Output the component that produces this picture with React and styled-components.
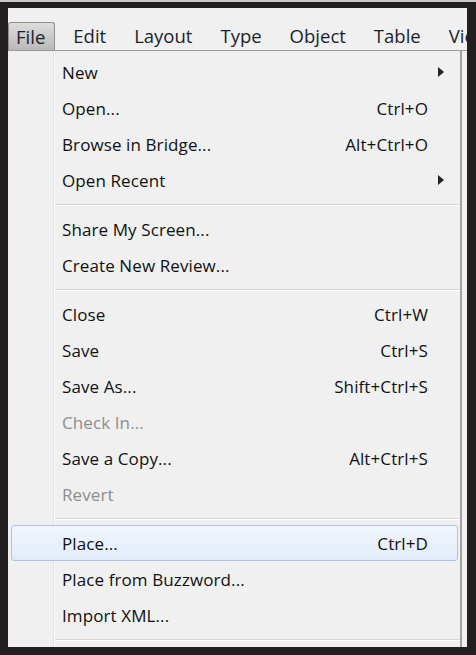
import React from "react";
import styled, {createGlobalStyle} from "styled-components";

const GlobalStyle = createGlobalStyle`
  body {
    margin: 0;
    background: #231f20;
  }
`;

const Frame = styled.div`
  width: 476px;
  height: 655px;
  box-sizing: border-box;
  background: #231f20;
  border-top: 2px solid #c9c9c9;
  padding: 6px 9px 8px 8px;
`;

const Window = styled.div`
  height: 100%;
  background: #f0f0f0;
  display: flex;
  flex-direction: column;
  overflow: hidden;
  font-family: "Open Sans", "Noto Sans", sans-serif;
  color: #111;
`;

const MenuBar = styled.div`
  height: 42px;
  flex: none;
  display: flex;
  align-items: flex-end;
  white-space: nowrap;
  border-bottom: 1px solid #9a9a9a;
  margin-right: -40px;
`;

const MenuTitle = styled.div`
  height: 28px;
  box-sizing: border-box;
  padding: 0 28px 0 0;
  font-size: 18.5px;
  line-height: 28px;
  color: #1b1f2b;
  ${p => p.$active && `
    background: linear-gradient(#dcdcdc, #b9b9b9);
    border: 1px solid #8e8e8e;
    border-bottom: none;
    border-radius: 3px 3px 0 0;
    padding: 0 9px 0 7px;
    margin-right: 18px;
    line-height: 27px;
  `}
`;

const Dropdown = styled.div`
  flex: 1;
  display: flex;
  width: 454px;
  box-sizing: border-box;
  border-right: 2px solid #a2a2a2;
  padding: 3px 0 0 0;
  position: relative;
`;

const Gutter = styled.div`
  position: absolute;
  left: 45px;
  top: 0;
  bottom: 0;
  width: 1px;
  background: #e2e2e2;
  border-right: 1px solid #fafafa;
`;

const List = styled.div`
  flex: 1;
  display: flex;
  flex-direction: column;
  position: relative;
`;

const Item = styled.div`
  height: 36px;
  box-sizing: border-box;
  display: flex;
  align-items: center;
  padding: 0 29px 0 50px;
  margin: 0 2px 0 3px;
  font-size: 17px;
  letter-spacing: 0.1px;
  color: ${p => (p.$disabled ? "#8d8d8d" : "#111")};
  border: 1px solid transparent;
  border-radius: 3px;
  ${p => p.$hover && `
    border-color: #a9c6e6;
    background: linear-gradient(#f1f6fd, #e2ecf9);
  `}
`;

const Label = styled.span`
  flex: 1;
`;

const Shortcut = styled.span`
  color: #111;
`;

const Arrow = styled.span`
  width: 0;
  height: 0;
  border-top: 5px solid transparent;
  border-bottom: 5px solid transparent;
  border-left: 6px solid #222;
  margin-right: -16px;
`;

const Separator = styled.div`
  height: 13px;
  display: flex;
  align-items: center;
  margin-left: 47px;
  &::after {
    content: "";
    flex: 1;
    height: 1px;
    background: #d7d7d7;
    border-bottom: 1px solid #fff;
  }
`;

const menus = ["File", "Edit", "Layout", "Type", "Object", "Table", "View"];

const groups = [
  [
    {label: "New", sub: true},
    {label: "Open...", key: "Ctrl+O"},
    {label: "Browse in Bridge...", key: "Alt+Ctrl+O"},
    {label: "Open Recent", sub: true},
  ],
  [
    {label: "Share My Screen..."},
    {label: "Create New Review..."},
  ],
  [
    {label: "Close", key: "Ctrl+W"},
    {label: "Save", key: "Ctrl+S"},
    {label: "Save As...", key: "Shift+Ctrl+S"},
    {label: "Check In...", disabled: true},
    {label: "Save a Copy...", key: "Alt+Ctrl+S"},
    {label: "Revert", disabled: true},
  ],
  [
    {label: "Place...", key: "Ctrl+D", hover: true},
    {label: "Place from Buzzword..."},
    {label: "Import XML..."},
  ],
];

const App = () => {
  return (
    <Frame>
      <GlobalStyle/>
      <Window>
        <MenuBar>
          {menus.map((name, i) => (
            <MenuTitle key={name} $active={i === 0}>{name}</MenuTitle>
          ))}
        </MenuBar>
        <Dropdown>
          <Gutter/>
          <List>
            {groups.map((group, gi) => (
              <React.Fragment key={gi}>
                {gi > 0 && <Separator/>}
                {group.map(item => (
                  <Item key={item.label} $disabled={item.disabled} $hover={item.hover}>
                    <Label>{item.label}</Label>
                    {item.key && <Shortcut>{item.key}</Shortcut>}
                    {item.sub && <Arrow/>}
                  </Item>
                ))}
              </React.Fragment>
            ))}
            <Separator/>
          </List>
        </Dropdown>
      </Window>
    </Frame>
  );
};

export default App;
